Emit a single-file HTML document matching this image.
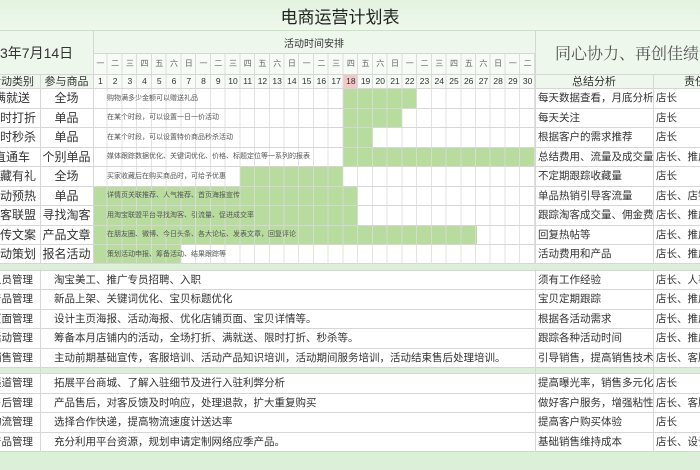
<!DOCTYPE html>
<html><head><meta charset="utf-8">
<style>
*{margin:0;padding:0;box-sizing:border-box}
body{width:700px;height:470px;overflow:hidden;background:#fff;position:relative;font-family:"Liberation Sans","Noto Sans CJK SC",sans-serif;color:#333}
.a{position:absolute;white-space:nowrap}
.c{position:absolute;display:flex;align-items:center;justify-content:center;white-space:nowrap}
.l{position:absolute;display:flex;align-items:center;white-space:nowrap}
.g{position:absolute;background:#b8dc9e}
.hl{position:absolute;left:0;width:700px;height:1px;background:#d6d6d6}
.vl{position:absolute;width:1px;background:#d6d6d6}
.grid{position:absolute;left:93px;width:442px;background:repeating-linear-gradient(to right,transparent 0,transparent 13.73px,#dcdcdc 13.73px,#dcdcdc 14.73px)}
.wk span,.dn span{position:absolute;width:14.73px;text-align:center}
.t{font-size:7px;color:#555}
</style></head><body>
<!-- title band -->
<div class="a" style="left:0;top:0;width:700px;height:31px;background:linear-gradient(#e3f3df,#eef8ec);border-bottom:1px solid #c9e2c4"></div>
<div class="c" style="left:0;top:0;width:680px;height:31px;font-size:17px;color:#222">电商运营计划表</div>
<!-- header area -->
<div class="a" style="left:0;top:31px;width:700px;height:57px;background:#eef7ec"></div>
<div class="a" style="left:93px;top:53px;width:442px;height:35px;background:#f6fbf5"></div>
<div class="a" style="left:343px;top:74px;width:14.7px;height:14px;background:#f5c8c8"></div>
<div class="c" style="left:93px;top:31px;width:442px;height:22px;font-size:10px;color:#333">活动时间安排</div>
<div class="l" style="left:0;top:31px;height:43px;font-size:14px;color:#333">3年7月14日</div>
<div class="l" style="left:555px;top:31px;height:43px;font-size:16px;color:#555;font-family:'Liberation Serif','Noto Serif CJK SC',serif">同心协力、再创佳绩</div>
<div class="c" style="left:-16px;top:74px;width:56px;height:14px;font-size:11px">活动类别</div>
<div class="c" style="left:40px;top:74px;width:53px;height:14px;font-size:11px">参与商品</div>
<div class="c" style="left:535px;top:74px;width:118px;height:14px;font-size:11px">总结分析</div>
<div class="l" style="left:684px;top:74px;height:14px;font-size:11px">责任人</div>

<div class="a wk" style="left:93px;top:53px;height:21px;font-size:8px;color:#666;line-height:21px">
<span style="left:0">一</span><span style="left:14.73px">二</span><span style="left:29.47px">三</span><span style="left:44.2px">四</span><span style="left:58.93px">五</span><span style="left:73.67px">六</span><span style="left:88.4px">日</span><span style="left:103.13px">一</span><span style="left:117.87px">二</span><span style="left:132.6px">三</span><span style="left:147.33px">四</span><span style="left:162.07px">五</span><span style="left:176.8px">六</span><span style="left:191.53px">日</span><span style="left:206.27px">一</span><span style="left:221px">二</span><span style="left:235.73px">三</span><span style="left:250.47px">四</span><span style="left:265.2px">五</span><span style="left:279.93px">六</span><span style="left:294.67px">日</span><span style="left:309.4px">一</span><span style="left:324.13px">二</span><span style="left:338.87px">三</span><span style="left:353.6px">四</span><span style="left:368.33px">五</span><span style="left:383.07px">六</span><span style="left:397.8px">日</span><span style="left:412.53px">一</span><span style="left:427.27px">二</span></div>
<div class="a dn" style="left:93px;top:74px;height:14px;font-size:8.5px;color:#333;line-height:14px">
<span style="left:0">1</span><span style="left:14.73px">2</span><span style="left:29.47px">3</span><span style="left:44.2px">4</span><span style="left:58.93px">5</span><span style="left:73.67px">6</span><span style="left:88.4px">7</span><span style="left:103.13px">8</span><span style="left:117.87px">9</span><span style="left:132.6px">10</span><span style="left:147.33px">11</span><span style="left:162.07px">12</span><span style="left:176.8px">13</span><span style="left:191.53px">14</span><span style="left:206.27px">15</span><span style="left:221px">16</span><span style="left:235.73px">17</span><span style="left:250.47px">18</span><span style="left:265.2px">19</span><span style="left:279.93px">20</span><span style="left:294.67px">21</span><span style="left:309.4px">22</span><span style="left:324.13px">23</span><span style="left:338.87px">24</span><span style="left:353.6px">25</span><span style="left:368.33px">26</span><span style="left:383.07px">27</span><span style="left:397.8px">28</span><span style="left:412.53px">29</span><span style="left:427.27px">30</span></div>

<!-- green bars -->
<div class="g" style="left:343px;top:88px;width:74px;height:19.5px"></div>
<div class="g" style="left:343px;top:107.5px;width:59px;height:19.5px"></div>
<div class="g" style="left:343px;top:127px;width:30px;height:19.5px"></div>
<div class="g" style="left:343px;top:146.5px;width:192px;height:19.5px"></div>
<div class="g" style="left:240px;top:166px;width:103px;height:19.5px"></div>
<div class="g" style="left:93px;top:185.5px;width:265px;height:39px"></div>
<div class="g" style="left:93px;top:224.5px;width:384px;height:19.5px"></div>
<div class="g" style="left:93px;top:244px;width:88px;height:19.5px"></div>
<!-- white text backgrounds where bars are covered by merged text cells -->
<div class="a" style="left:93px;top:88px;width:250px;height:19.5px;background:#fff"></div>
<div class="a" style="left:93px;top:107.5px;width:250px;height:19.5px;background:#fff"></div>
<div class="a" style="left:93px;top:127px;width:250px;height:19.5px;background:#fff"></div>
<div class="a" style="left:93px;top:146.5px;width:250px;height:19.5px;background:#fff"></div>

<div class="grid" style="top:53px;height:35px"></div>
<div class="grid" style="top:88px;height:175.5px;opacity:.8"></div>
<div class="a" style="left:93px;top:88px;width:250px;height:78px;background:#fff;opacity:.0"></div>

<div class="l t" style="left:107px;top:88px;height:19.5px">购物满多少金额可以赠送礼品</div>
<div class="l t" style="left:107px;top:107.5px;height:19.5px">在某个时段，可以设置一日一价活动</div>
<div class="l t" style="left:107px;top:127px;height:19.5px">在某个时段，可以设置特价商品秒杀活动</div>
<div class="l t" style="left:107px;top:146.5px;height:19.5px">媒体跟踪数据优化、关键词优化、价格、标题定位等一系列的报表</div>
<div class="l t" style="left:107px;top:166px;height:19.5px">买家收藏后在购买商品时，可给予优惠</div>
<div class="l t" style="left:107px;top:185.5px;height:19.5px">详情页关联推荐、人气推荐、首页海报宣传</div>
<div class="l t" style="left:107px;top:205px;height:19.5px">用淘宝联盟平台寻找淘客、引流量、促进成交率</div>
<div class="l t" style="left:107px;top:224.5px;height:19.5px">在朋友圈、微博、今日头条、各大论坛、发表文章，回复评论</div>
<div class="l t" style="left:107px;top:244px;height:19.5px">策划活动申报、筹备活动、结果跟踪等</div>

<!-- section1 left columns -->
<div style="position:absolute;left:0;top:88px;font-size:12px;color:#333">
<div class="c" style="left:-16px;top:0;width:56px;height:19.5px">满就送</div>
<div class="c" style="left:-16px;top:19.5px;width:56px;height:19.5px">限时打折</div>
<div class="c" style="left:-16px;top:39px;width:56px;height:19.5px">限时秒杀</div>
<div class="c" style="left:-16px;top:58.5px;width:56px;height:19.5px">直通车</div>
<div class="c" style="left:-16px;top:78px;width:56px;height:19.5px">收藏有礼</div>
<div class="c" style="left:-16px;top:97.5px;width:56px;height:19.5px">活动预热</div>
<div class="c" style="left:-16px;top:117px;width:56px;height:19.5px">淘客联盟</div>
<div class="c" style="left:-16px;top:136.5px;width:56px;height:19.5px">宣传文案</div>
<div class="c" style="left:-16px;top:156px;width:56px;height:19.5px">活动策划</div>
<div class="c" style="left:40px;top:0;width:53px;height:19.5px">全场</div>
<div class="c" style="left:40px;top:19.5px;width:53px;height:19.5px">单品</div>
<div class="c" style="left:40px;top:39px;width:53px;height:19.5px">单品</div>
<div class="c" style="left:40px;top:58.5px;width:53px;height:19.5px">个别单品</div>
<div class="c" style="left:40px;top:78px;width:53px;height:19.5px">全场</div>
<div class="c" style="left:40px;top:97.5px;width:53px;height:19.5px">单品</div>
<div class="c" style="left:40px;top:117px;width:53px;height:19.5px">寻找淘客</div>
<div class="c" style="left:40px;top:136.5px;width:53px;height:19.5px">产品文章</div>
<div class="c" style="left:40px;top:156px;width:53px;height:19.5px">报名活动</div>
</div>
<div style="position:absolute;left:0;top:88px;font-size:10.5px;color:#333">
<div class="l" style="left:538px;top:0;height:19.5px">每天数据查看，月底分析</div>
<div class="l" style="left:538px;top:19.5px;height:19.5px">每天关注</div>
<div class="l" style="left:538px;top:39px;height:19.5px">根据客户的需求推荐</div>
<div class="l" style="left:538px;top:58.5px;height:19.5px">总结费用、流量及成交量</div>
<div class="l" style="left:538px;top:78px;height:19.5px">不定期跟踪收藏量</div>
<div class="l" style="left:538px;top:97.5px;height:19.5px">单品热销引导客流量</div>
<div class="l" style="left:538px;top:117px;height:19.5px;width:115px;overflow:hidden">跟踪淘客成交量、佣金费用</div>
<div class="l" style="left:538px;top:136.5px;height:19.5px">回复热帖等</div>
<div class="l" style="left:538px;top:156px;height:19.5px">活动费用和产品</div>
<div class="l" style="left:656px;top:0;height:19.5px">店长</div>
<div class="l" style="left:656px;top:19.5px;height:19.5px">店长</div>
<div class="l" style="left:656px;top:39px;height:19.5px">店长</div>
<div class="l" style="left:656px;top:58.5px;height:19.5px">店长、推广</div>
<div class="l" style="left:656px;top:78px;height:19.5px">店长</div>
<div class="l" style="left:656px;top:97.5px;height:19.5px">店长、店铺</div>
<div class="l" style="left:656px;top:117px;height:19.5px">店长、推广</div>
<div class="l" style="left:656px;top:136.5px;height:19.5px">店长、推广</div>
<div class="l" style="left:656px;top:156px;height:19.5px">店长、推广</div>
</div>

<!-- separators -->
<div class="a" style="left:0;top:263.5px;width:700px;height:6px;background:#dcefd8"></div>
<div class="a" style="left:0;top:367px;width:700px;height:6px;background:#dcefd8"></div>
<div class="a" style="left:0;top:451px;width:700px;height:19px;background:#dcefd8;border-top:1px solid #c9dfc5"></div>

<!-- section 2 & 3 -->
<div style="position:absolute;left:0;top:269.5px;font-size:10.5px;color:#333">
<div class="c" style="left:-16px;top:0;width:56px;height:19.5px">人员管理</div>
<div class="c" style="left:-16px;top:19.5px;width:56px;height:19.5px">产品管理</div>
<div class="c" style="left:-16px;top:39px;width:56px;height:19.5px">页面管理</div>
<div class="c" style="left:-16px;top:58.5px;width:56px;height:19.5px">活动管理</div>
<div class="c" style="left:-16px;top:78px;width:56px;height:19.5px">销售管理</div>
<div class="l" style="left:54px;top:0;height:19.5px">淘宝美工、推广专员招聘、入职</div>
<div class="l" style="left:54px;top:19.5px;height:19.5px">新品上架、关键词优化、宝贝标题优化</div>
<div class="l" style="left:54px;top:39px;height:19.5px">设计主页海报、活动海报、优化店铺页面、宝贝详情等。</div>
<div class="l" style="left:54px;top:58.5px;height:19.5px">筹备本月店铺内的活动，全场打折、满就送、限时打折、秒杀等。</div>
<div class="l" style="left:54px;top:78px;height:19.5px">主动前期基础宣传，客服培训、活动产品知识培训，活动期间服务培训，活动结束售后处理培训。</div>
<div class="l" style="left:538px;top:0;height:19.5px">须有工作经验</div>
<div class="l" style="left:538px;top:19.5px;height:19.5px">宝贝定期跟踪</div>
<div class="l" style="left:538px;top:39px;height:19.5px">根据各活动需求</div>
<div class="l" style="left:538px;top:58.5px;height:19.5px">跟踪各种活动时间</div>
<div class="l" style="left:538px;top:78px;height:19.5px">引导销售，提高销售技术</div>
<div class="l" style="left:656px;top:0;height:19.5px">店长、人事</div>
<div class="l" style="left:656px;top:19.5px;height:19.5px">店长、推广</div>
<div class="l" style="left:656px;top:39px;height:19.5px">店长、推广</div>
<div class="l" style="left:656px;top:58.5px;height:19.5px">店长、推广</div>
<div class="l" style="left:656px;top:78px;height:19.5px">店长、客服</div>
</div>
<div style="position:absolute;left:0;top:373px;font-size:10.5px;color:#333">
<div class="c" style="left:-16px;top:0;width:56px;height:19.5px">渠道管理</div>
<div class="c" style="left:-16px;top:19.5px;width:56px;height:19.5px">售后管理</div>
<div class="c" style="left:-16px;top:39px;width:56px;height:19.5px">物流管理</div>
<div class="c" style="left:-16px;top:58.5px;width:56px;height:19.5px">产品管理</div>
<div class="l" style="left:54px;top:0;height:19.5px">拓展平台商城、了解入驻细节及进行入驻利弊分析</div>
<div class="l" style="left:54px;top:19.5px;height:19.5px">产品售后，对客反馈及时响应，处理退款，扩大重复购买</div>
<div class="l" style="left:54px;top:39px;height:19.5px">选择合作快递，提高物流速度计送达率</div>
<div class="l" style="left:54px;top:58.5px;height:19.5px">充分利用平台资源，规划申请定制网络应季产品。</div>
<div class="l" style="left:538px;top:0;height:19.5px">提高曝光率，销售多元化</div>
<div class="l" style="left:538px;top:19.5px;height:19.5px">做好客户服务，增强粘性</div>
<div class="l" style="left:538px;top:39px;height:19.5px">提高客户购买体验</div>
<div class="l" style="left:538px;top:58.5px;height:19.5px">基础销售维持成本</div>
<div class="l" style="left:656px;top:0;height:19.5px">店长</div>
<div class="l" style="left:656px;top:19.5px;height:19.5px">店长、客服</div>
<div class="l" style="left:656px;top:39px;height:19.5px">店长</div>
<div class="l" style="left:656px;top:58.5px;height:19.5px">店长、设计</div>
</div>

<!-- horizontal lines -->
<div class="hl" style="top:53px;left:93px;width:442px"></div>
<div class="hl" style="top:74px"></div>
<div class="hl" style="top:88px"></div>
<div class="hl" style="top:107.5px"></div><div class="hl" style="top:127px"></div><div class="hl" style="top:146.5px"></div><div class="hl" style="top:166px"></div><div class="hl" style="top:185.5px"></div><div class="hl" style="top:205px"></div><div class="hl" style="top:224.5px"></div><div class="hl" style="top:244px"></div><div class="hl" style="top:263px"></div>
<div class="hl" style="top:269.5px"></div><div class="hl" style="top:289px"></div><div class="hl" style="top:308.5px"></div><div class="hl" style="top:328px"></div><div class="hl" style="top:347.5px"></div><div class="hl" style="top:366.5px"></div>
<div class="hl" style="top:373px"></div><div class="hl" style="top:392.5px"></div><div class="hl" style="top:412px"></div><div class="hl" style="top:431.5px"></div>
<!-- vertical lines -->
<div class="vl" style="left:40px;top:74px;height:190px"></div>
<div class="vl" style="left:93px;top:31px;height:233px"></div>
<div class="vl" style="left:535px;top:31px;height:233px"></div>
<div class="vl" style="left:653px;top:74px;height:190px"></div>
<div class="vl" style="left:40px;top:269px;height:182px"></div>
<div class="vl" style="left:535px;top:269px;height:182px"></div>
<div class="vl" style="left:653px;top:269px;height:182px"></div>
</body></html>
